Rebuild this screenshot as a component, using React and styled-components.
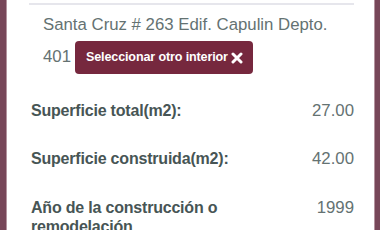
import React from 'react'
import styled, {createGlobalStyle} from 'styled-components'

const GlobalStyles = createGlobalStyle`
  html, body {
    margin: 0;
    padding: 0;
    background: #774759;
    font-family: "Liberation Sans", Arial, sans-serif;
    overflow: hidden;
  }
`

const Card = styled.div`
  margin-left: 6px;
  width: 369px;
  height: 230px;
  background: #fff;
  border-left: 1px solid #b4949f;
  border-right: 1px solid #b4949f;
  box-sizing: border-box;
  padding: 3px 20px 0 22px;
`

const Rule = styled.hr`
  margin: 0;
  border: 0;
  border-top: 2px solid #e6e6ec;
`

const Address = styled.p`
  margin: 6px 0 0;
  padding-left: 14px;
  font-size: 16.8px;
  line-height: 27px;
  color: #647272;
`

const SwapButton = styled.button`
  display: inline-flex;
  align-items: center;
  gap: 3px;
  vertical-align: middle;
  margin: 3px 0 3px 4px;
  padding: 7px 10px 7px 11px;
  border: 0;
  border-radius: 4px;
  background: #76283e;
  color: #fff;
  font-family: "Liberation Sans", Arial, sans-serif;
  font-weight: bold;
  font-size: 12.6px;
  letter-spacing: -0.15px;
  line-height: 19px;
  cursor: pointer;
`

const Row = styled.div`
  display: grid;
  grid-template-columns: 2fr 1fr;
  margin-top: ${p => p.gap}px;
  line-height: 19px;
`

const Label = styled.div`
  padding-left: 2px;
  font-size: 16px;
  letter-spacing: -0.2px;
  font-weight: bold;
  color: #475555;
`

const Value = styled.div`
  text-align: right;
  font-size: 16.8px;
  color: #647272;
`

function Times() {
  return (
    <svg width="12" height="12" viewBox="0 0 12 12">
      <path d="M2 2 L10 10 M10 2 L2 10" stroke="currentColor" strokeWidth="3" strokeLinecap="round" fill="none" />
    </svg>
  )
}

const details = [
  {label: 'Superficie total(m2):', value: '27.00', gap: 24},
  {label: 'Superficie construida(m2):', value: '42.00', gap: 29},
  {label: 'Año de la construcción o remodelación', value: '1999', gap: 30},
]

export default function App() {
  return (
    <>
      <GlobalStyles />
      <Card>
        <Rule />
        <Address>
          Santa Cruz # 263 Edif. Capulin Depto. 401
          <SwapButton>
            Seleccionar otro interior<Times />
          </SwapButton>
        </Address>
        {details.map(d => (
          <Row key={d.label} gap={d.gap}>
            <Label>{d.label}</Label>
            <Value>{d.value}</Value>
          </Row>
        ))}
      </Card>
    </>
  )
}
